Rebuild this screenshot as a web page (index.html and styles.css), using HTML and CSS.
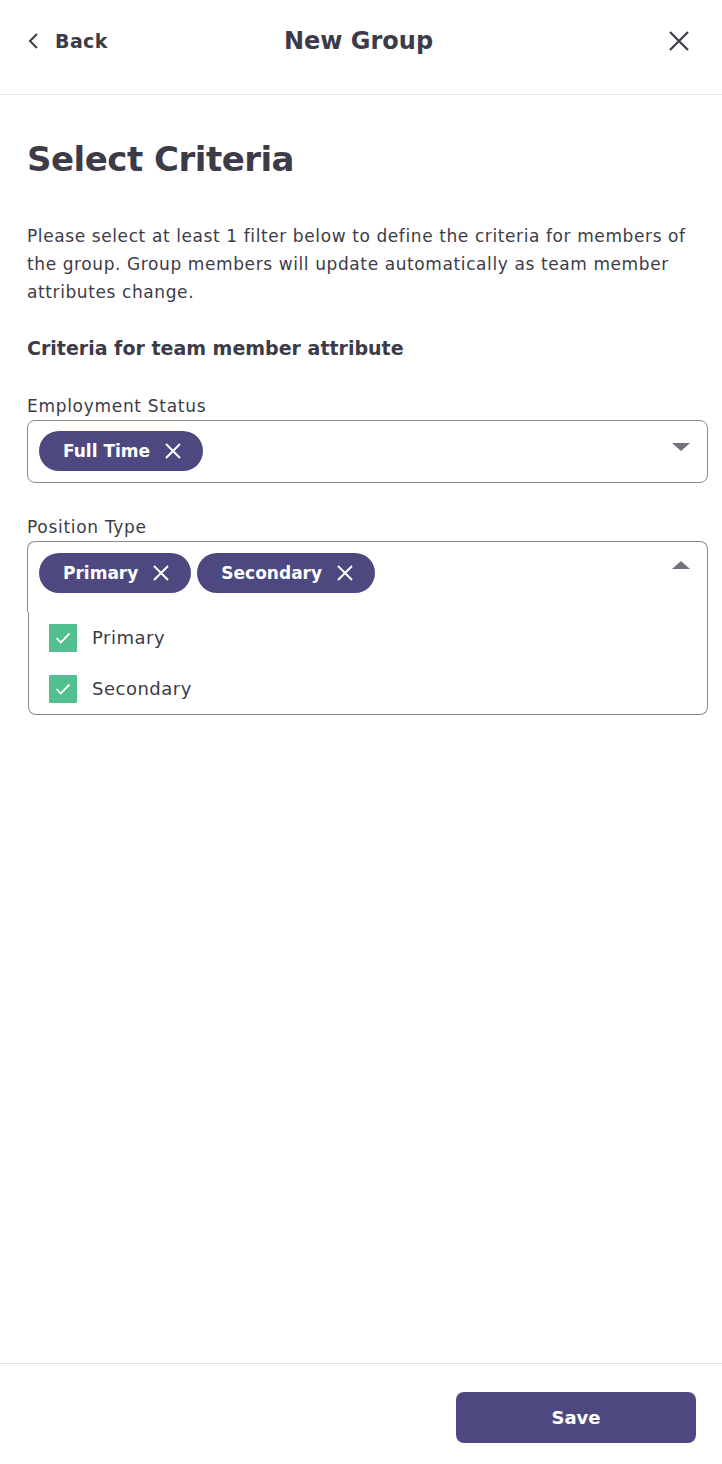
FILE: index.html
```html
<!DOCTYPE html>
<html>
<head>
    <title>New Group</title>
    <link rel="stylesheet" href="styles.css">
</head>
<body>
    <div class="page">
        <div class="topbar">
            <a class="back" href="#">
                <svg width="14" height="18" viewBox="0 0 14 18"><path d="M10 2 L3 9 L10 16" fill="none" stroke="#3d3b47" stroke-width="2"/></svg>
                <span>Back</span>
            </a>
            <div class="title">New Group</div>
            <a class="close" href="#">
                <svg width="22" height="22" viewBox="0 0 22 22"><path d="M2 2 L20 20 M20 2 L2 20" stroke="#3d3b47" stroke-width="2.2"/></svg>
            </a>
        </div>

        <div class="content">
            <h1>Select Criteria</h1>
            <p class="intro">Please select at least 1 filter below to define the criteria for members of the group. Group members will update automatically as team member attributes change.</p>
            <h3>Criteria for team member attribute</h3>

            <div class="field">
                <label>Employment Status</label>
                <div class="select">
                    <div class="chips">
                        <span class="chip">Full Time
                            <svg width="18" height="18" viewBox="0 0 18 18"><path d="M2 2 L16 16 M16 2 L2 16" stroke="#fff" stroke-width="2"/></svg>
                        </span>
                    </div>
                    <span class="caret down"></span>
                </div>
            </div>

            <div class="field">
                <label>Position Type</label>
                <div class="select open">
                    <div class="chips">
                        <span class="chip">Primary
                            <svg width="18" height="18" viewBox="0 0 18 18"><path d="M2 2 L16 16 M16 2 L2 16" stroke="#fff" stroke-width="2"/></svg>
                        </span>
                        <span class="chip">Secondary
                            <svg width="18" height="18" viewBox="0 0 18 18"><path d="M2 2 L16 16 M16 2 L2 16" stroke="#fff" stroke-width="2"/></svg>
                        </span>
                    </div>
                    <span class="caret up"></span>
                </div>
                <div class="menu">
                    <div class="option">
                        <span class="check"><svg width="28" height="28" viewBox="0 0 28 28"><path d="M7.5 14 L11.8 18.5 L20.5 9.5" fill="none" stroke="#fff" stroke-width="1.8"/></svg></span>
                        Primary
                    </div>
                    <div class="option">
                        <span class="check"><svg width="28" height="28" viewBox="0 0 28 28"><path d="M7.5 14 L11.8 18.5 L20.5 9.5" fill="none" stroke="#fff" stroke-width="1.8"/></svg></span>
                        Secondary
                    </div>
                </div>
            </div>
        </div>

        <div class="footer">
            <button class="save">Save</button>
        </div>
    </div>
</body>
</html>
```

FILE: styles.css
```css
body { margin: 0; font-family: "DejaVu Sans", "Open Sans", sans-serif; color: #3d3b47; background: #fff; }
.page { height: 1464px; display: flex; flex-direction: column; }

.topbar { height: 95px; border-bottom: 1px solid #e2e2e4; display: flex; align-items: center; justify-content: space-between; padding: 0 32px 13px 27px; box-sizing: border-box; }
.back { display: flex; align-items: center; gap: 14px; color: #3d3b47; text-decoration: none; font-size: 19px; font-weight: 700; width: 110px; letter-spacing: 0.4px; }
.title { font-size: 24px; font-weight: 700; }
.close { width: 110px; display: flex; justify-content: flex-end; }
.close svg { display: block; }

.content { flex: 1; padding: 0 14px 0 27px; }
h1 { font-size: 34px; font-weight: 700; margin: 38px 0 0; line-height: 52px; letter-spacing: -0.5px; }
.intro { font-size: 17px; font-weight: 500; line-height: 28px; margin: 37px 0 0; letter-spacing: 0.6px; }
h3 { font-size: 19px; font-weight: 700; margin: 28px 0 0; line-height: 28px; }

.field { margin-top: 32px; position: relative; }
.field + .field { margin-top: 32px; }
label { display: block; font-size: 17px; font-weight: 500; line-height: 24px; margin-bottom: 2px; letter-spacing: 0.7px; }

.select { border: 1px solid #8b8a94; border-radius: 8px; height: 63px; box-sizing: border-box; display: flex; align-items: flex-start; justify-content: space-between; padding: 10px 17px 0 11px; }
.select.open { height: 71px; padding-top: 11px; border-bottom: none; border-radius: 8px 8px 0 0; }
.chips { display: flex; gap: 6px; }
.chip { background: #4d4880; color: #fff; height: 40px; border-radius: 20px; display: inline-flex; align-items: center; gap: 14px; padding: 0 21px 0 24px; font-size: 17px; font-weight: 700; }
.chip svg { display: block; }

.caret { width: 0; height: 0; border-left: 9px solid transparent; border-right: 9px solid transparent; }
.caret.down { border-top: 8px solid #72717c; margin-top: 12px; }
.caret.up { border-bottom: 8px solid #72717c; margin-top: 8px; }

.menu { position: absolute; left: 1px; right: 0; top: 97px; background: #fff; border: 1px solid #8b8a94; border-top: none; border-radius: 0 0 8px 8px; }
.option { display: flex; align-items: center; gap: 15px; padding: 0 20px; height: 51px; font-size: 18px; font-weight: 500; letter-spacing: 0.5px; }
.check { width: 28px; height: 28px; background: #52bf8f; border-radius: 1px; }
.check svg { display: block; }

.footer { height: 101px; border-top: 1px solid #e2e2e4; display: flex; justify-content: flex-end; align-items: flex-start; padding: 28px 26px 0 0; box-sizing: border-box; }
.save { width: 240px; height: 51px; border: none; border-radius: 8px; background: #4d4880; color: #fff; font-family: inherit; font-size: 18px; font-weight: 700; }
```
